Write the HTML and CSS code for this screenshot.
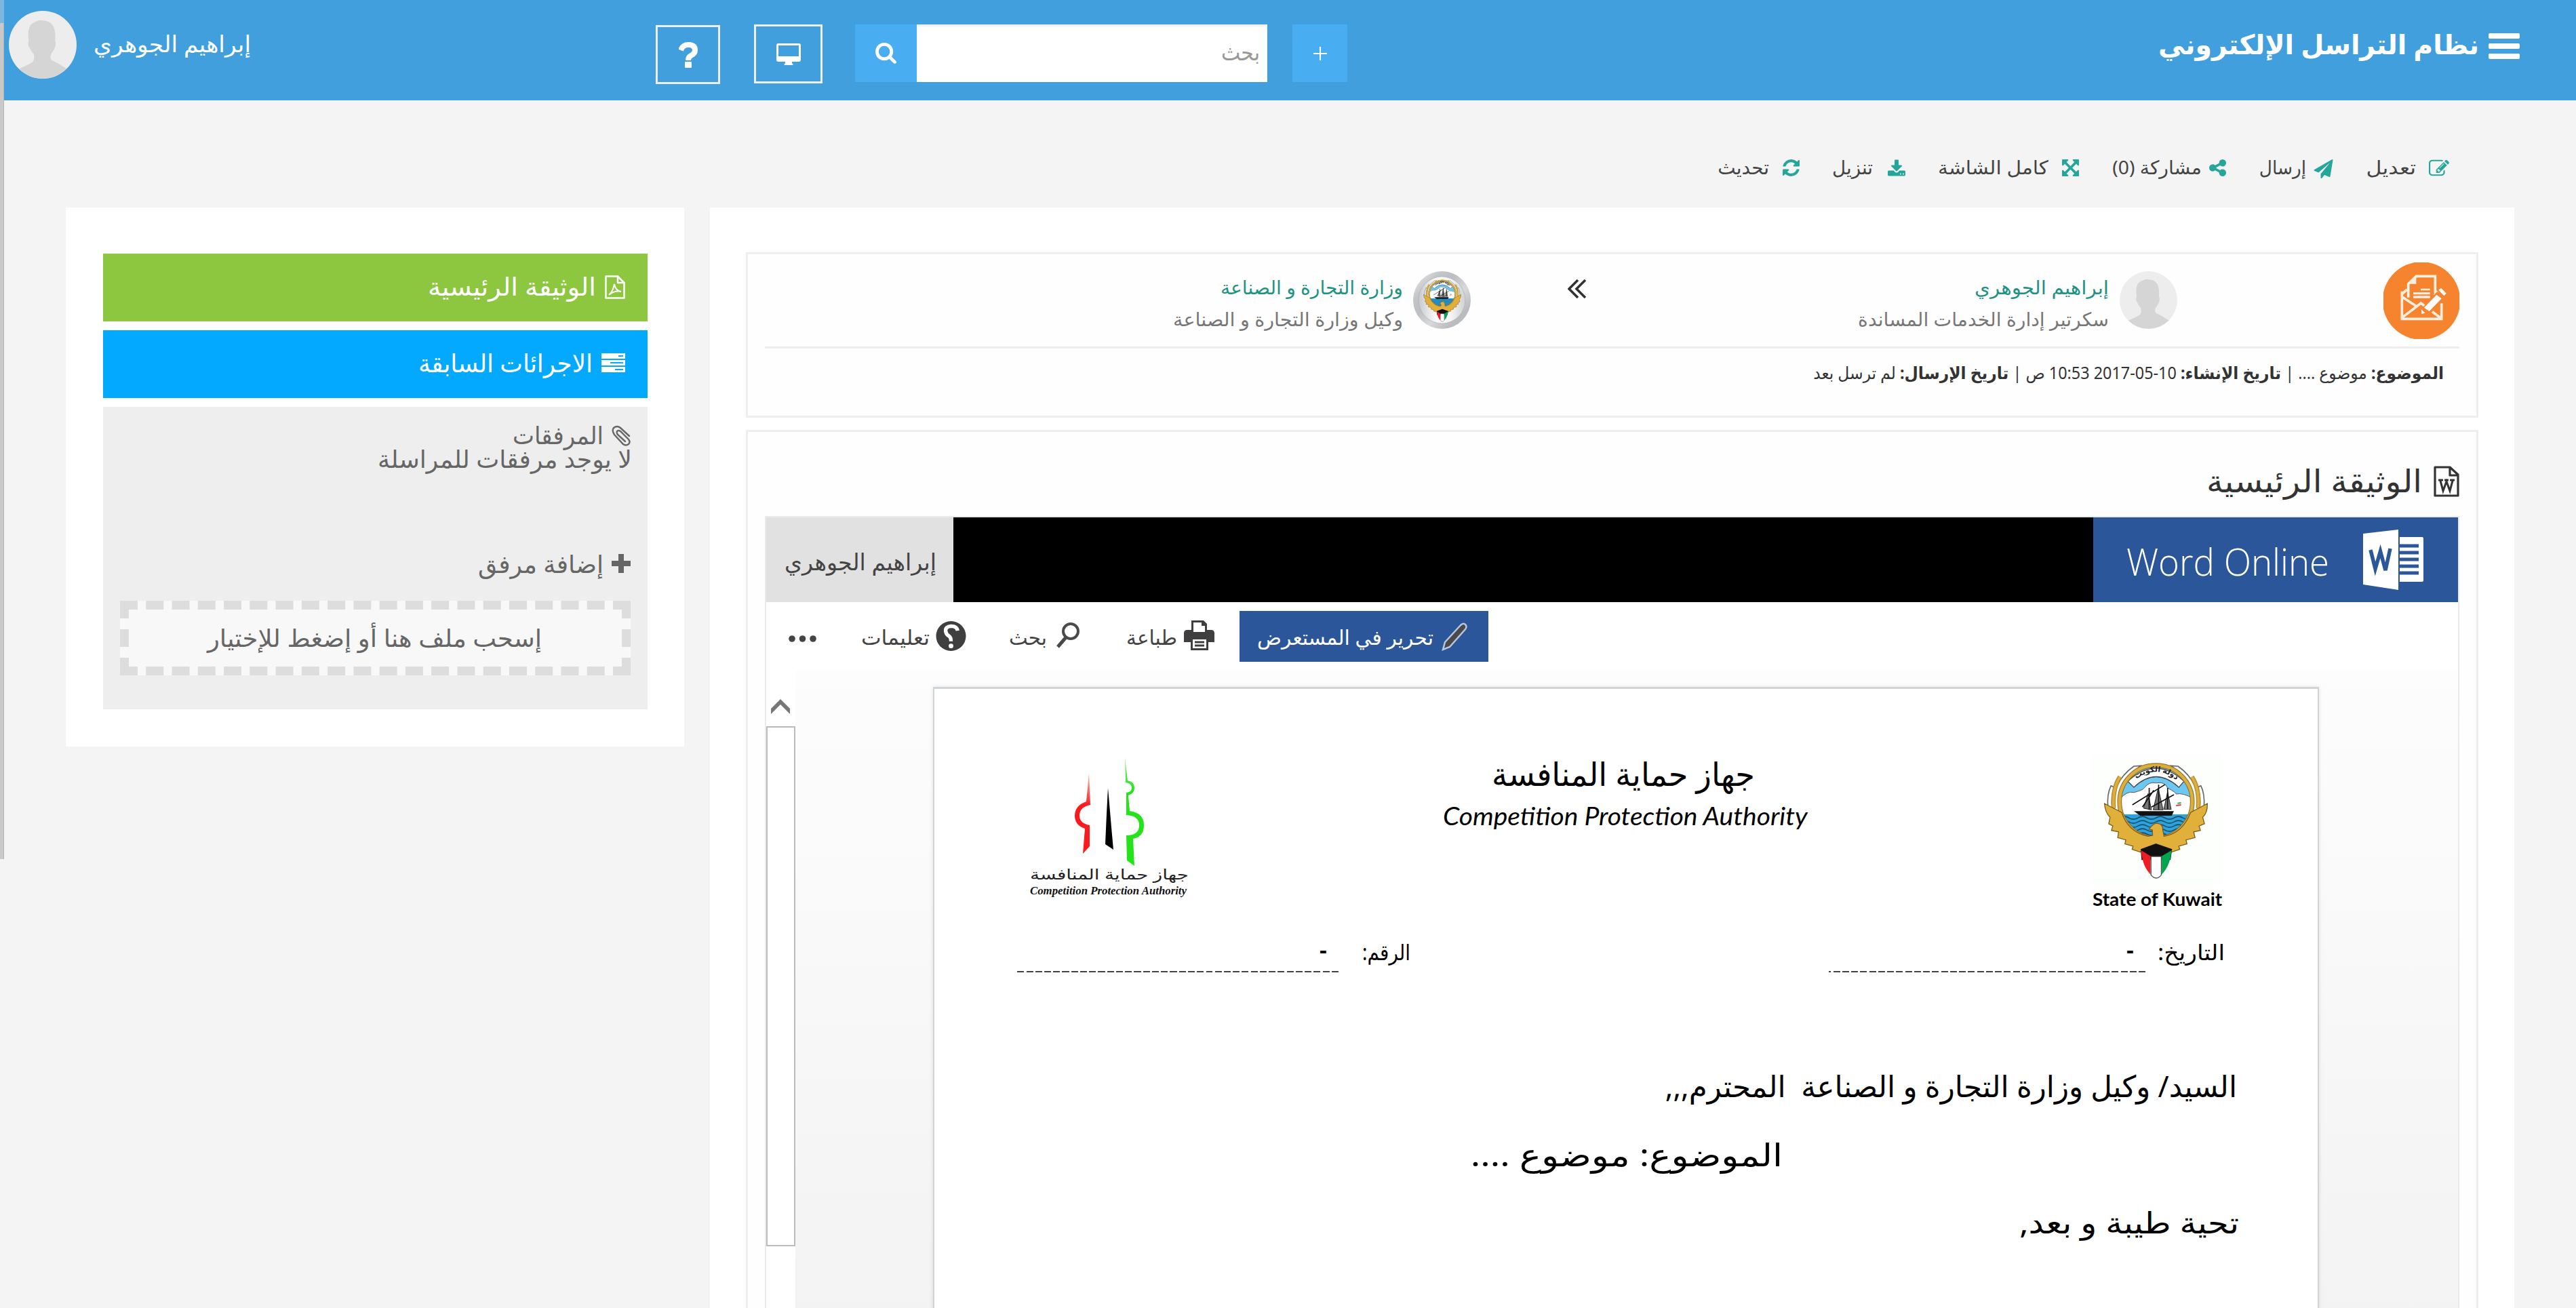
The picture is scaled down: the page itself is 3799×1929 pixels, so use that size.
FILE: index.html
```html
<!DOCTYPE html>
<html lang="ar" dir="rtl">
<head>
<meta charset="utf-8">
<title>نظام التراسل الإلكتروني</title>
<link rel="stylesheet" href="styles.css">
</head>
<body>
<svg class="defs" aria-hidden="true">
  <symbol id="avatar" viewBox="0 0 85 85">
    <clipPath id="avatar-clip"><circle cx="42.5" cy="42.5" r="42.5"/></clipPath>
    <g clip-path="url(#avatar-clip)">
      <rect width="85" height="85" fill="#ededed"/>
      <path fill="#d5d5d5" d="M38 12 Q50 11 55 18 Q59 24 58 37 Q60 42 57 48 L53 54 Q51 59 54 62 Q62 65 70 71 L85 80 V85 H0 V80 L14 72 Q24 68 30 64 Q33 60 31 54 Q27 50 26 46 Q23 43 25 37 Q23 25 27 18 Q31 14 38 12Z"/>
    </g>
  </symbol>
  <symbol id="emblem" viewBox="128 100 464 522">
    <g fill="#fff" stroke="#666" stroke-width="5">
      <path d="M146 300 Q142 240 160 205 L176 212 Q158 250 166 310Z"/>
      <path d="M574 300 Q578 240 560 205 L544 212 Q562 250 554 310Z"/>
      <path d="M172 312 Q160 190 262 118 L292 116 Q190 190 200 325Z"/>
      <path d="M548 312 Q560 190 458 118 L428 116 Q530 190 520 325Z"/>
    </g>
    <g fill="none" stroke="#b8892b" stroke-width="20">
      <path d="M172 305 Q165 220 200 165"/>
      <path d="M548 305 Q555 220 520 165"/>
    </g>
    <g fill="none" stroke="#dcae3c" stroke-width="12">
      <path d="M172 305 Q165 220 200 165"/>
      <path d="M548 305 Q555 220 520 165"/>
    </g>
    <clipPath id="sea-clip"><circle cx="360" cy="276" r="158"/></clipPath>
    <g clip-path="url(#sea-clip)">
      <rect x="190" y="110" width="340" height="230" fill="#6cc8f2"/>
      <path fill="#fff" stroke="#555" stroke-width="3" d="M195 270 Q230 225 262 235 Q300 225 308 215 Q330 185 360 193 Q400 185 412 215 Q450 235 450 242 Q480 235 525 262 V345 H195Z"/>
      <rect x="190" y="332" width="340" height="120" fill="#2ba3dc"/>
      <path fill="none" stroke="#1d4d66" stroke-width="5" d="M200 348 q20-12 40 0 t40 0 40 0 40 0 40 0 40 0 40 0 40 0M200 366 q20-12 40 0 t40 0 40 0 40 0 40 0 40 0 40 0 40 0M200 384 q20-12 40 0 t40 0 40 0 40 0 40 0 40 0 40 0 40 0M200 402 q20-12 40 0 t40 0 40 0 40 0 40 0 40 0 40 0 40 0M200 420 q20-12 40 0 t40 0 40 0 40 0 40 0 40 0 40 0 40 0"/>
      <path fill="#fff" stroke="#444" stroke-width="4" d="M235 185 Q360 70 485 185 L462 212 Q360 118 262 212Z"/>
    </g>
    <circle cx="360" cy="276" r="162" fill="none" stroke="#8a6a24" stroke-width="20"/>
    <circle cx="360" cy="276" r="162" fill="none" stroke="#dcae3c" stroke-width="14"/>
    <path id="banner-arc" fill="none" d="M258 188 Q360 96 466 192"/>
    <text class="banner-text" text-anchor="middle"><textPath href="#banner-arc" startOffset="50%">دولة الكويت</textPath></text>
    <path fill="#111" d="M262 318 H440 L430 338 H290Z"/>
    <path fill="#777" stroke="#222" stroke-width="3" d="M305 305 L325 240 L340 312ZM348 312 L370 215 L392 312ZM395 310 L412 232 L428 310Z"/>
    <path fill="none" stroke="#111" stroke-width="5" d="M255 290 L400 200M330 312 V215M372 312 V200M412 310 V215M300 300 L350 225M340 300L440 245"/>
    <path stroke="#e33" stroke-width="6" d="M450 293 L472 290"/><path stroke="#2a6" stroke-width="6" d="M456 283 L472 281"/>
    <path fill="#e0b03b" stroke="#7d5d1c" stroke-width="4" d="M131 284 L208 324 Q235 410 325 430 L345 426 L344 402 L330 398 Q345 375 362 372 Q392 374 390 400 L396 430 Q480 415 514 324 L589 284 Q590 325 568 345 L576 374 L552 384 L558 404 L528 410 L534 436 L494 446 L498 464 L462 474 L466 488 L430 500 L360 466 L290 500 L254 488 L258 474 L222 464 L226 446 L190 436 L194 410 L162 404 L168 384 L150 374 L156 345 Q134 325 131 284Z"/>
    <path fill="#111" d="M292 487 L360 462 L432 487 L425 535 H296Z"/>
    <path fill="#ee1c25" d="M294 492 L336 518 V600 Q298 560 294 492Z"/>
    <path fill="#00a550" d="M430 492 L386 518 V600 Q424 560 430 492Z"/>
    <path fill="#fff" stroke="#555" stroke-width="4" d="M338 520 H384 V602 Q361 630 338 602Z"/>
  </symbol>
</svg>

<div class="page-scroll"><i></i></div>

<header class="topbar">
  <div class="burger"><i></i><i></i><i></i></div>
  <h1 class="tx app-title">نظام التراسل الإلكتروني</h1>
  <button class="add-btn"><svg viewBox="0 0 20 20"><path d="M10 0V20M0 10H20" stroke="#fff" stroke-width="2"/></svg></button>
  <div class="search">
    <div class="search-input"><span class="tx search-ph">بحث</span></div>
    <button class="search-btn"><svg viewBox="64 128 1664 1664"><path fill="#fff" d="M1216 832q0-185-131.5-316.5t-316.5-131.5-316.5 131.5-131.5 316.5 131.5 316.5 316.5 131.5 316.5-131.5 131.5-316.5zm512 832q0 52-38 90t-90 38q-54 0-90-38l-343-342q-179 124-399 124-143 0-273.5-55.5t-225-150-150-225-55.5-273.5 55.5-273.5 150-225 225-150 273.5-55.5 273.5 55.5 225 150 150 225 55.5 273.5q0 220-124 399l343 343q37 37 37 90z"/></svg></button>
  </div>
  <button class="box-btn screen-btn"><svg viewBox="0 0 36 32"><path fill="#fff" fill-rule="evenodd" d="M3 0H33Q36 0 36 3V24Q36 27 33 27H23V29L25 32H11L13 29V27H3Q0 27 0 24V3Q0 0 3 0ZM3 3V19H33V3Z"/></svg></button>
  <button class="box-btn help-btn"><svg viewBox="0 0 28 38"><path fill="none" stroke="#fff" stroke-width="8" d="M3 12Q6 4 14 4Q24 4 24 12Q24 17 18 20Q14 22 14 27"/><rect x="9" y="29" width="10" height="9" rx="1" fill="#fff"/></svg></button>
  <span class="tx user-name">إبراهيم الجوهري</span>
  <svg class="user-avatar"><use href="#avatar"/></svg>
</header>

<nav class="actions">
  <svg class="ic w30" viewBox="0 128 1792 1408"><path d="M888 1184l116-116-152-152-116 116v56h96v96h56zm440-720q-16-16-33 1l-350 350q-17 17-1 33t33-1l350-350q17-17 1-33zm80 594v190q0 119-84.5 203.5t-203.5 84.5h-832q-119 0-203.5-84.5t-84.5-203.5v-832q0-119 84.5-203.5t203.5-84.5h832q63 0 117 25 15 7 18 23 3 17-9 29l-49 49q-14 14-32 8-23-6-45-6h-832q-66 0-113 47t-47 113v832q0 66 47 113t113 47h832q66 0 113-47t47-113v-126q0-13 9-22l64-64q15-15 35-7t20 29zm-96-738l288 288-672 672h-288v-288zm444 132l-92 92-288-288 92-92q28-28 68-28t68 28l152 152q28 28 28 68t-28 68z"/></svg>
  <a class="tx a-edit">تعديل</a>
  <svg class="ic w29" viewBox="0 0 1792 1792"><path d="M1764 11q33 24 27 64l-256 1536q-5 29-32 45-14 8-31 8-11 0-24-5l-453-185-242 295q-18 23-49 23-13 0-22-4-19-7-30.5-23.5t-11.5-36.5v-349l864-1059-1069 925-395-162q-37-14-40-55-2-40 32-59l1664-960q15-9 32-9 20 0 36 11z"/></svg>
  <a class="tx a-send">إرسال</a>
  <svg class="ic w25" viewBox="128 128 1536 1536"><path d="M1344 1024q133 0 226.5 93.5t93.5 226.5-93.5 226.5-226.5 93.5-226.5-93.5-93.5-226.5q0-12 2-34l-360-180q-92 86-218 86-133 0-226.5-93.5t-93.5-226.5 93.5-226.5 226.5-93.5q126 0 218 86l360-180q-2-22-2-34 0-133 93.5-226.5t226.5-93.5 226.5 93.5 93.5 226.5-93.5 226.5-226.5 93.5q-126 0-218-86l-360 180q2 22 2 34t-2 34l360 180q92-86 218-86z"/></svg>
  <a class="tx a-share">مشاركة (0)</a>
  <svg class="ic w25" viewBox="128 128 1536 1536"><path d="M1411 541l-355 355 355 355 144-144q29-31 70-14 39 17 39 59v448q0 26-19 45t-45 19h-448q-42 0-59-40-17-39 14-69l144-144-355-355-355 355 144 144q31 30 14 69-17 40-59 40h-448q-26 0-45-19t-19-45v-448q0-42 40-59 39-17 69 14l144 144 355-355-355-355-144 144q-19 19-45 19-12 0-24-5-40-17-40-59v-448q0-26 19-45t45-19h448q42 0 59 40 17 39-14 69l-144 144 355 355 355-355-144-144q-31-30-14-69 17-40 59-40h448q26 0 45 19t19 45v448q0 42-39 59-13 5-25 5-26 0-45-19z"/></svg>
  <a class="tx a-full">كامل الشاشة</a>
  <svg class="ic w26" viewBox="64 0 1664 1536"><path d="M1344 1344q0-26-19-45t-45-19-45 19-19 45 19 45 45 19 45-19 19-45zm256 0q0-26-19-45t-45-19-45 19-19 45 19 45 45 19 45-19 19-45zm128-224v320q0 40-28 68t-68 28h-1472q-40 0-68-28t-28-68v-320q0-40 28-68t68-28h465l135 136q58 56 136 56t136-56l136-136h464q40 0 68 28t28 68zm-325-569q17 41-14 70l-448 448q-18 19-45 19t-45-19l-448-448q-31-29-14-70 17-39 59-39h256v-448q0-26 19-45t45-19h256q26 0 45 19t19 45v448h256q42 0 59 39z"/></svg>
  <a class="tx a-down">تنزيل</a>
  <svg class="ic w25" viewBox="128 128 1536 1536"><path d="M1639 1056q0 5-1 7-64 268-268 434.5t-478 166.5q-146 0-282.5-55t-243.5-157l-129 129q-19 19-45 19t-45-19-19-45v-448q0-26 19-45t45-19h448q26 0 45 19t19 45-19 45l-137 137q71 66 161 102t187 36q134 0 250-65t186-179q11-17 53-117 8-23 30-23h192q13 0 22.5 9.5t9.5 22.5zm25-800v448q0 26-19 45t-45 19h-448q-26 0-45-19t-19-45 19-45l138-138q-148-137-349-137-134 0-250 65t-186 179q-11 17-53 117-8 23-30 23h-199q-13 0-22.5-9.5t-9.5-22.5v-7q65-268 270-434.5t480-166.5q146 0 284 55.5t245 156.5l130-129q19-19 45-19t45 19 19 45z"/></svg>
  <a class="tx a-refresh">تحديث</a>
</nav>

<div class="columns">
  <main class="panel">
    <section class="card summary">
      <div class="parties">
        <svg class="mail" viewBox="0 0 336 339">
          <clipPath id="mail-clip"><rect width="336" height="339"/></clipPath>
          <circle cx="168" cy="169.500" r="172" fill="#f6842f" clip-path="url(#mail-clip)"/>
          <g fill="none" stroke="#fdeee2" stroke-width="11">
            <path d="M82 128V250H257V180M105 120L82 140M82 152L146 194M78 248L166 180L256 248M225 145L240 128"/>
            <path d="M110 155V95L145 61H229V135"/>
          </g>
          <path fill="#fdeee2" d="M110 95L145 61V95ZM165 116H206V124H165ZM132 132H206V142H132ZM132 148H206V158H132Z"/>
          <path fill="#f6842f" d="M168 206L238 128L270 165L205 228Z"/>
          <path fill="#fff" d="M180 200L235 143L257 160L203 216ZM244 122L255 113L278 137L268 148ZM168 208L185 224L168 228Z"/>
        </svg>
        <svg class="party-pic from-pic"><use href="#avatar"/></svg>
        <div class="party from">
          <div class="tx p-name f-name">إبراهيم الجوهري</div>
          <div class="tx p-role f-role">سكرتير إدارة الخدمات المساندة</div>
        </div>
        <svg class="chev" viewBox="0 0 28 28"><path fill="none" stroke="#333" stroke-width="3.600" d="M15 1L2 14L15 27M26 1L13 14L26 27"/></svg>
        <svg class="party-pic to-pic" viewBox="0 0 85 85">
          <defs>
            <linearGradient id="ring" x1="0" y1="0" x2="1" y2="1"><stop offset="0" stop-color="#f0f0f1"/><stop offset=".25" stop-color="#c4c5c8"/><stop offset=".4" stop-color="#bcbec1"/><stop offset=".6" stop-color="#d8d9db"/><stop offset=".8" stop-color="#b9bbbe"/><stop offset="1" stop-color="#c0c2c5"/></linearGradient>
            <linearGradient id="disc" x1="0" y1="0" x2="1" y2="0"><stop offset="0" stop-color="#c8c9cc"/><stop offset=".4" stop-color="#fff"/><stop offset=".7" stop-color="#f4f4f5"/><stop offset="1" stop-color="#cfd0d2"/></linearGradient>
          </defs>
          <circle cx="42.500" cy="42.500" r="42.500" fill="url(#ring)"/>
          <circle cx="42.500" cy="42.500" r="34.500" fill="url(#disc)" stroke="#aaa" stroke-width=".6"/>
          <use href="#emblem" x="15" y="12" width="56" height="63"/>
        </svg>
        <div class="party to">
          <div class="tx p-name t-name">وزارة التجارة و الصناعة</div>
          <div class="tx p-role t-role">وكيل وزارة التجارة و الصناعة</div>
        </div>
      </div>
      <div class="meta"><span class="tx meta-line"><b>الموضوع:</b> موضوع .... | <b>تاريخ الإنشاء:</b> <bdi dir="ltr">2017-05-10</bdi> 10:53 ص | <b>تاريخ الإرسال:</b> لم ترسل بعد</span></div>
    </section>

    <section class="card document">
      <div class="doc-title">
        <svg class="word-file" viewBox="0 0 38 46"><path fill="none" stroke="#333" stroke-width="3.200" stroke-linejoin="round" d="M2 2H24L36 13V44H2ZM24 2V14H36"/><path fill="none" stroke="#333" stroke-width="3" d="M7 21H14M24 21H31M16 21H22M10 22L14 37L19 23L24 37L28 22"/></svg>
        <h2 class="tx doc-h">الوثيقة الرئيسية</h2>
      </div>
      <div class="viewer">
        <div class="word-bar">
          <div class="word-brand">
            <svg class="word-logo" viewBox="0 0 89 89"><path fill="#fff" d="M0 6L52 0V89L0 81Z"/><path fill="#fff" d="M54 11H87Q89 11 89 13V75Q89 77 87 77H54Z"/><path stroke="#2b579a" stroke-width="5" d="M54 24H82M54 34H82M54 44H82M54 54H82M54 64H82"/><path fill="none" stroke="#2b579a" stroke-width="5.500" d="M11 30L18 58L25.500 32L33 60L40 28"/></svg>
            <span class="tx word-name" dir="ltr">Word Online</span>
          </div>
          <div class="word-space"></div>
          <div class="word-user"><span class="tx wu-name">إبراهيم الجوهري</span></div>
        </div>
        <div class="word-tools">
          <div class="edit-btn">
            <svg class="pencil" viewBox="0 0 38 42"><path fill="#4a4a4a" stroke="#b9c6da" stroke-width="2.500" d="M2 40L5 29L28 4Q32 0 35 3Q38 6 35 10L12 36Z"/></svg>
            <span class="tx wt-edit">تحرير في المستعرض</span>
          </div>
          <svg class="printer" viewBox="0 0 45 44"><path fill="#3f3f3f" fill-rule="evenodd" d="M11 0H29L34 5V14H40Q45 14 45 19V32H36V44H10V32H0V19Q0 14 5 14H11ZM14 3V17H31V8H26V3ZM13 28V41H33V28Z"/><path stroke="#3f3f3f" stroke-width="3" d="M16 32H30M16 37H30"/></svg>
          <span class="tx wt-print">طباعة</span>
          <svg class="lens" viewBox="0 0 35 38"><circle cx="21" cy="13" r="11" fill="none" stroke="#4a4a4a" stroke-width="4"/><path stroke="#4a4a4a" stroke-width="5" d="M14 22L2 36"/></svg>
          <span class="tx wt-find">بحث</span>
          <svg class="help" viewBox="0 0 46 46"><circle cx="23" cy="23" r="22.500" fill="#3f3f3f"/><path fill="none" stroke="#fff" stroke-width="5.500" d="M33 15Q32 8 23 8Q14 9 15 16Q16 21 20 23Q23 25 23 31"/><circle cx="23" cy="38" r="3.500" fill="#fff"/></svg>
          <span class="tx wt-help">تعليمات</span>
          <svg class="dots" viewBox="0 0 41 10"><g fill="#444"><circle cx="5" cy="5" r="4.800"/><circle cx="20.500" cy="5" r="4.800"/><circle cx="36" cy="5" r="4.800"/></g></svg>
        </div>
        <div class="word-body">
          <div class="canvas">
            <article class="paper">
              <div class="letterhead">
                <div class="state">
                  <div class="state-pic"><svg><use href="#emblem"/></svg></div>
                  <div class="tx state-name" dir="ltr">State of Kuwait</div>
                </div>
                <div class="authority">
                  <div class="tx auth-ar">جهاز حماية المنافسة</div>
                  <div class="tx auth-en" dir="ltr">Competition Protection Authority</div>
                </div>
                <svg class="auth-logo" viewBox="0 0 300 260">
                  <defs>
                    <linearGradient id="lg-g" x1="0" y1="0" x2="0" y2="1"><stop offset="0" stop-color="#2be01c" stop-opacity=".5"/><stop offset=".3" stop-color="#25e31a"/></linearGradient>
                    <linearGradient id="lg-r" x1="0" y1="0" x2="0" y2="1"><stop offset="0" stop-color="#e66" stop-opacity=".5"/><stop offset=".4" stop-color="#fb1a1e"/></linearGradient>
                  </defs>
                  <path fill="url(#lg-r)" d="M116 50L118 97Q102 100 102 113Q102 124 117 127V158L107 169L110 132Q95 127 95 113Q95 98 112 92Z"/>
                  <path fill="#000" d="M144 72L149 130L152 163L140 155L142 110Z"/>
                  <path fill="url(#lg-g)" d="M169 27L173 61Q183 63 183 72Q183 80 174 83L176 106Q197 109 197 127Q197 144 181 147L183 187L172 179L171 142Q190 142 190 127Q190 113 171 112V79Q179 78 179 72Q179 65 170 64Z"/>
                  <text class="logo-ar" x="263" y="207" textLength="234" lengthAdjust="spacingAndGlyphs">جهاز حماية المنافسة</text>
                  <text class="logo-en" x="29" y="229" direction="ltr" textLength="231" lengthAdjust="spacingAndGlyphs">Competition Protection Authority</text>
                </svg>
              </div>
              <div class="fields">
                <div class="tx fl-date">التاريخ:</div>
                <div class="line line-date"><span class="val">-</span></div>
                <div class="tx fl-num">الرقم:</div>
                <div class="line line-num"><span class="val">-</span></div>
              </div>
              <div class="tx body-1">السيد/ وكيل وزارة التجارة و الصناعة &nbsp;المحترم,,,</div>
              <div class="tx body-2">الموضوع: موضوع ....</div>
              <div class="tx body-3">تحية طيبة و بعد,</div>
            </article>
          </div>
          <div class="word-scroll">
            <svg viewBox="0 0 28 22"><path fill="#777" d="M14 0L28 14V22L14 8L0 22V14Z"/></svg>
            <div class="thumb"></div>
          </div>
        </div>
      </div>
    </section>
  </main>

  <aside class="side">
    <div class="side-btn green">
      <svg class="pdf" viewBox="0 0 30 35"><path fill="none" stroke="#fff" stroke-width="2.500" stroke-linejoin="round" d="M1.500 1.500H19L28.500 11V33.500H1.500ZM19 1.500V11H28.500"/><path fill="none" stroke="#fff" stroke-width="2" d="M6 29Q12 24 14 13Q16 23 24 24Q14 22 6 29Z"/></svg>
      <span class="tx s-main">الوثيقة الرئيسية</span>
    </div>
    <div class="side-btn blue">
      <svg class="server" viewBox="0 0 35 28"><path fill="#fff" fill-rule="evenodd" d="M0 0H35V8H0ZM25 3V5H32V3ZM0 10H35V18H0ZM13 13V15H32V13ZM0 20H35V28H0ZM20 23V25H32V23Z"/></svg>
      <span class="tx s-prev">الاجرائات السابقة</span>
    </div>
    <div class="attach">
      <div class="att-row att-1">
        <svg class="clip" viewBox="0 0 28 31"><path fill="none" stroke="#666" stroke-width="2.400" stroke-linecap="round" d="M26 16L13 4Q8 0 3 4Q0 8 4 14L17 28Q21 31 25 28Q28 25 25 21L13 9Q10 7 8 9Q7 11 9 14L20 24"/></svg>
        <span class="tx s-att">المرفقات</span>
      </div>
      <div class="tx s-none">لا يوجد مرفقات للمراسلة</div>
      <div class="att-row att-2">
        <svg class="plus" viewBox="0 0 28 28"><path stroke="#666" stroke-width="8" d="M14 0V28M0 14H28"/></svg>
        <span class="tx s-add">إضافة مرفق</span>
      </div>
      <div class="drop"><span class="tx s-drop">إسحب ملف هنا أو إضغط للإختيار</span></div>
    </div>
  </aside>
</div>
</body>
</html>
```
FILE: styles.css
```css
* { box-sizing: border-box; }
html, body { margin: 0; height: 1929px; overflow: hidden; }
body {
  background: #f4f4f4;
  color: #444;
  font-family: "Noto Sans", "DejaVu Sans", sans-serif;
}
svg { display: block; flex: none; }
.defs { position: absolute; left: 60px; top: 0; width: 0; height: 0; }
h1, h2 { margin: 0; }
button { border: 0; padding: 0; background: none; display: flex; align-items: center; justify-content: center; }

/* text labels: fixed width, glyphs stretched from the reading edge by --k */
.tx {
  display: block;
  flex: none;
  white-space: nowrap;
  transform: translateX(2px) scaleX(var(--k, 1));
  transform-origin: right center;
}
.tx[dir="ltr"] { transform: scaleX(var(--k, 1)); transform-origin: left center; }

/* window scrollbar */
.page-scroll { position: absolute; left: 0; top: 0; width: 6px; height: 1267px; background: #7db6de; z-index: 2; }
.page-scroll i { display: block; margin-top: 34px; height: 1233px; background: #c9c9c9; border-right: 1px solid #b5b5b5; }

/* top bar */
.topbar { display: flex; align-items: flex-start; height: 148px; padding-right: 83px; background: #419fdd; color: #fff; }
.topbar > * { flex: none; }
.burger { width: 46px; height: 38px; margin-top: 49px; display: flex; flex-direction: column; justify-content: space-between; }
.burger i { height: 8px; border-radius: 2px; background: #fff; }
.app-title { --k: .983; width: 469px; margin: 35px 16px 0 0; font-size: 40px; line-height: 60px; font-weight: 700; }
.add-btn { width: 81px; height: 85px; margin: 36px 1198px 0 0; background: #49aef1; }
.add-btn svg { width: 20px; height: 20px; }
.search { display: flex; width: 608px; height: 85px; margin: 36px 37px 0 0; }
.search-input { width: 517px; background: #fff; padding: 15px 13px 0 0; box-shadow: inset 0 3px 3px rgba(0,0,0,.07); }
.search-ph { --k: .88; width: 55px; color: #999; font-size: 34px; line-height: 50px; }
.search-btn { width: 91px; background: #49aef1; }
.search-btn svg { width: 31px; height: 31px; }
.box-btn { border: 3px solid #eee; height: 87px; }
.screen-btn { width: 101px; margin: 36px 48px 0 0; }
.screen-btn svg { width: 36px; height: 32px; }
.help-btn { width: 95px; margin: 37px 50px 0 0; }
.help-btn svg { width: 28px; height: 38px; }
.user-name { --k: 1.011; width: 229px; margin: 39px 599px 0 0; font-size: 34px; line-height: 50px; }
.user-avatar { width: 100px; height: 100px; margin: 16px 26px 0 0; }

/* action links */
.actions { display: flex; align-items: flex-start; height: 158px; padding: 87px 187px 0 0; font-size: 28px; line-height: 24px; }
.actions .tx { margin-top: -1px; }
.ic { fill: #26a69a; height: 25px; }
.ic:not(:first-child) { margin-right: 49px; }
.w30 { width: 30px; } .w29 { width: 29px; height: 28px; } .w26 { width: 26px; } .w25 { width: 25px; }
.a-edit { --k: 1.13; width: 71px; margin-right: 21px; }
.a-send { --k: .94; width: 67px; margin-right: 13px; }
.a-share { --k: 1.01; width: 130px; margin-right: 13px; }
.a-full { --k: 1.061; width: 160px; margin-right: 22px; }
.a-down { --k: .988; width: 57px; margin-right: 24px; }
.a-refresh { width: 73px; margin-right: 22px; }

/* columns */
.columns { display: flex; align-items: flex-start; padding-right: 91px; gap: 38px; }
.panel { flex: none; width: 2661px; height: 1640px; background: #fff; padding: 66px 53px 0; overflow: hidden; }
.side { flex: none; width: 912px; height: 795px; background: #fff; padding: 68px 54px 0 55px; }
.card { border: 3px solid #eee; background: #fefefe; }

/* sender and receiver */
.summary { height: 244px; padding: 0 25px; }
.parties { display: flex; align-items: flex-start; height: 139px; padding-top: 12px; border-bottom: 3px solid #eee; }
.mail { width: 112px; height: 113px; }
.party-pic { width: 85px; height: 85px; margin-top: 13px; }
.from-pic { margin-right: 304px; }
.party { flex: none; margin-top: 13px; line-height: 47px; font-size: 28px; }
.from { width: 366px; margin-right: 18px; }
.to { width: 336px; margin-right: 17px; }
.p-name { color: #1f9382; }
.p-role { color: #777; }
.f-name { --k: 1.048; width: 195px; }
.f-role { --k: 1.01; width: 366px; }
.t-name { --k: 1.007; width: 266px; }
.t-role { --k: 1.024; width: 336px; }
.chev { width: 28px; height: 28px; margin: 25px 402px 0 0; }
.to-pic { margin-right: 143px; }
.meta { padding: 15px 25px 0 0; color: #333; font-size: 25px; line-height: 40px; }
.meta-line { --k: .936; width: 927px; }

/* document card */
.document { height: 1400px; margin-top: 18px; padding: 0 25px; }
.doc-title { display: flex; height: 124px; padding-top: 50px; }
.word-file { width: 38px; height: 46px; }
.doc-h { --k: 1.076; width: 314px; margin: -9px 19px 0 0; font-size: 46px; line-height: 60px; font-weight: 400; color: #333; }
.viewer { border: 2px solid #eaeaea; border-bottom: 0; height: 1240px; background: #fff; }
.word-bar { display: flex; height: 125px; }
.word-brand { display: flex; width: 538px; background: #2b579a; padding: 18px 51px 0 0; color: #fff; }
.word-logo { width: 89px; height: 89px; }
.word-name { --k: .942; width: 297px; margin: 10px 52px 0 0; font-family: "Open Sans", sans-serif; font-weight: 300; font-size: 56px; line-height: 72px; }
.word-space { flex: 1; background: #000; }
.word-user { width: 276px; background: #e1e1e1; padding: 40px 27px 0 0; color: #444; font-size: 34px; line-height: 50px; }
.wu-name { --k: .976; width: 221px; }
.word-tools { display: flex; align-items: flex-start; height: 100px; padding: 13px 1430px 0 0; font-size: 30px; line-height: 50px; }
.word-tools > * { flex: none; }
.word-tools > .tx { margin-top: 14px; }
.edit-btn { display: flex; width: 367px; height: 75px; padding: 14px 31px 0 0; background: #2b579a; color: #fff; }
.pencil { width: 38px; height: 42px; margin-top: 3px; }
.wt-edit { --k: .992; width: 257px; margin-right: 14px; }
.printer { width: 45px; height: 44px; margin: 14px 37px 0 0; }
.wt-print { --k: .985; width: 72px; margin-right: 12px; }
.lens { width: 35px; height: 38px; margin: 17px 69px 0 0; }
.wt-find { --k: .98; width: 53px; margin-right: 16px; }
.help { width: 45px; height: 46px; margin: 14px 64px 0 0; }
.wt-help { --k: 1.047; width: 98px; margin-right: 11px; }
.dots { width: 41px; height: 10px; margin: 36px 67px 0 0; }
.word-body { display: flex; height: 1015px; }
.canvas { flex: 1; background: linear-gradient(#fdfdfd, #f3f3f3 941px); padding: 25px 205px 0 203px; }
.paper { height: 1000px; background: #fff; border: 2px solid #d1d4d7; border-top-width: 3px; box-shadow: 0 0 6px rgba(0,0,0,.1); color: #000; }
.word-scroll { width: 43px; padding-top: 43px; }
.word-scroll svg { width: 28px; height: 22px; margin: 0 8px 18px 0; }
.thumb { height: 767px; border: 2px solid #b8bcc0; background: #fff; }

/* letter */
.letterhead { display: flex; align-items: flex-start; height: 364px; }
.state { width: 194px; margin: 97px 141px 0 0; }
.state-pic { width: 194px; height: 192px; padding: 11px 20px 0 0; background: #fdfffc; }
.state-pic svg { width: 155px; height: 173px; }
.state-name { --k: 1.035; width: 190px; margin: 3px 1px 0 0; font-family: Lato, sans-serif; font-weight: 700; font-size: 27px; line-height: 36px; }
.authority { width: 535px; margin: 90px 420px 0 0; }
.auth-ar { --k: .965; width: 384px; margin-right: 77px; font-size: 48px; line-height: 70px; }
.auth-en { --k: 1.083; width: 535px; margin-top: 3px; font-family: Lato, sans-serif; font-style: italic; font-size: 36px; line-height: 48px; }
.auth-logo { width: 300px; height: 260px; margin: 74px 338px 0 0; }
.logo-ar { font-size: 21px; fill: #222; }
.logo-en { font: italic 700 17px "Liberation Serif", serif; fill: #111; }
.banner-text { font-size: 34px; font-weight: 700; fill: #222; }
.fields { display: flex; align-items: flex-start; height: 180px; padding-top: 2px; font-size: 32px; line-height: 44px; }
.fl-date { --k: 1.08; width: 96px; margin-right: 139px; }
.fl-num { --k: .871; width: 68px; margin-right: 619px; }
.line { flex: none; height: 52px; background: repeating-linear-gradient(to left, #444 0 10px, transparent 10px 13.25px) bottom / 100% 2px no-repeat; }
.line-date { width: 467px; margin-right: 19px; }
.line-num { width: 477px; margin-right: 36px; }
.val { display: block; font: 700 34px/38px "Liberation Sans", sans-serif; padding-right: 17px; }
.body-1, .body-2, .body-3 { font-size: 44px; line-height: 60px; }
.body-1 { --k: .99; width: 840px; margin: 11px 121px 0 0; }
.body-2 { --k: 1.175; width: 456px; margin: 41px 791px 0 0; font-size: 46px; }
.body-3 { --k: 1.13; width: 320px; margin: 40px 118px 0 0; }

/* sidebar */
.side-btn { display: flex; height: 100px; margin-bottom: 13px; padding-right: 33px; color: #fff; font-size: 37px; line-height: 60px; }
.green { background: #8dc63f; }
.blue { background: #03a8ff; }
.pdf { width: 30px; height: 35px; margin-top: 32px; }
.server { width: 35px; height: 28px; margin-top: 34px; }
.s-main { --k: 1.043; width: 244px; margin: 18px 15px 0 0; }
.s-prev { --k: .967; width: 253px; margin: 18px 15px 0 0; }
.attach { height: 446px; background: #eee; padding: 27px 25px 0; color: #666; font-size: 36px; line-height: 35px; }
.att-row { display: flex; height: 35px; }
.clip { width: 28px; height: 31px; }
.s-att { --k: .944; width: 131px; margin: -3px 14px 0 0; }
.s-none { --k: 1.006; width: 372px; margin-top: -3px; height: 35px; }
.att-2 { margin-top: 120px; }
.plus { width: 28px; height: 28px; margin-top: 3px; }
.s-add { --k: 1.007; width: 182px; margin-right: 14px; }
.drop { height: 110px; margin-top: 37px; border: 13px dashed #ddd; background: #f8f8f8; padding: 19px 120px 0 0; line-height: 46px; }
.s-drop { --k: 1.029; width: 489px; }
```
